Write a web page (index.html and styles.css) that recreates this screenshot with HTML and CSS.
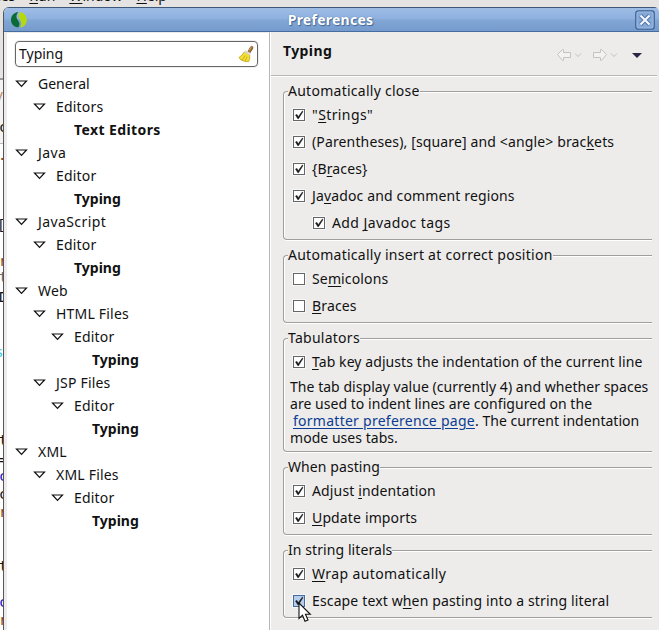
FILE: index.html
```html
<!DOCTYPE html>
<html lang="en">
<head>
<meta charset="utf-8">
<title>Preferences</title>
<link rel="stylesheet" href="styles.css">
</head>
<body>
<svg class="defs" width="0" height="0" aria-hidden="true">
  <symbol id="tick" viewBox="0 0 12 12"><path d="M2.500 6 4 5.400 5.200 7.800 9.400 2 10 2.600 5.500 9.700H4.800Z" fill="#161616" stroke="#161616" stroke-width=".5"/></symbol>
  <symbol id="open" viewBox="0 0 13 8"><path d="M1.500 1H11.500L6.500 6.300Z" fill="#fff" stroke="#111" stroke-width="1.200"/></symbol>
</svg>
<div class="menubar"><span>ces</span><span><u>R</u>un</span><span><u>W</u>indow</span><span><u>H</u>elp</span></div>
<div class="workspace">
  <div class="editor" aria-hidden="true">
    <i class="code tan l1">y</i><i class="code l2">c</i><i class="code brown l3">.</i><i class="code l4">[</i><i class="code brown l5">r</i><i class="code grey l6">t</i><i class="code l7">D</i><i class="code cyan l8">s</i><i class="code l9">t</i><i class="code l10">=</i><i class="code blue l11">c</i><i class="code l12">c</i><i class="code brown l13">r</i><i class="code l14">t</i><i class="code blue l15">c</i><i class="code brown l16">r</i>
  </div>
  <div class="dialog">
    <div class="titlebar">
      <svg class="logo" width="18" height="18" viewBox="0 0 18 18"><path d="M8.300 1C3.500 1.500 1 5 1 9c0 4 3 7.300 7.500 7.300C10.500 13 9 10.500 7.200 8.300 5.900 6 6.300 3.400 8.300 1Z" fill="#0b6b35"/><path d="M10 1c4.200.8 6.800 4 6.800 8 0 4-2.800 7-6.600 7.500C11.900 13.500 11.600 10.600 9.800 8.300 8.200 6 8.400 3.500 10 1Z" fill="#b5da0b"/></svg>
      <span class="title">Preferences</span>
      <svg class="close" width="20" height="20" viewBox="0 0 20 20"><rect x=".8" y=".8" width="18.400" height="18.400" rx="2.500" fill="#84a8d8" stroke="#3c618f" stroke-width="1.300"/><rect x="2" y="2" width="16" height="16" rx="1.500" fill="none" stroke="#a8c3e6" stroke-width=".7"/><path d="M5.500 5.500l9 9M14.500 5.500l-9 9" stroke="#4a70a3" stroke-width="4"/><path d="M5.500 5.500l9 9M14.500 5.500l-9 9" stroke="#f0f5fb" stroke-width="2.300"/></svg>
    </div>
    <div class="panes">
      <div class="sidebar">
        <div class="search"><span>Typing</span>
          <svg width="16" height="18" viewBox="0 0 16 18"><path d="M9.500 7.500 12.300 2.300Q13.300.8 14.400 1.600 15.400 2.500 14.400 4L11.300 8.800Z" fill="#a87332" stroke="#70451c" stroke-width=".8"/><path d="M11 5.500l2.500-3.800" stroke="#e0b779" stroke-width=".8"/><path d="M6.300 7Q4.500 10.300 1 12.500 2.500 15.500 5 15.700 8 17 10.700 16.500 12.300 13.500 11.700 9.800Z" fill="#f3df35" stroke="#bfa318" stroke-width=".8"/><path d="M7 10.500 4.300 15M9 11.500 7.300 16" stroke="#c8ad1c" stroke-width=".9"/><path d="M7 6.200l5.300 3.200" stroke="#e0d8cc" stroke-width="2.500"/></svg>
        </div>
        <div class="tree">
          <div class="node"><svg><use href="#open"/></svg><span>General</span></div>
          <div class="node d1"><svg><use href="#open"/></svg><span class="loose">Editors</span></div>
          <div class="node leaf d2"><span class="looser">Text Editors</span></div>
          <div class="node"><svg><use href="#open"/></svg><span class="looser">Java</span></div>
          <div class="node d1"><svg><use href="#open"/></svg><span class="loose">Editor</span></div>
          <div class="node leaf d2"><span>Typing</span></div>
          <div class="node"><svg><use href="#open"/></svg><span class="looser">JavaScript</span></div>
          <div class="node d1"><svg><use href="#open"/></svg><span class="loose">Editor</span></div>
          <div class="node leaf d2"><span>Typing</span></div>
          <div class="node"><svg><use href="#open"/></svg><span class="loose">Web</span></div>
          <div class="node d1"><svg><use href="#open"/></svg><span class="loose">HTML Files</span></div>
          <div class="node d2"><svg><use href="#open"/></svg><span class="loose">Editor</span></div>
          <div class="node leaf d3"><span>Typing</span></div>
          <div class="node d1"><svg><use href="#open"/></svg><span class="loose">JSP Files</span></div>
          <div class="node d2"><svg><use href="#open"/></svg><span class="loose">Editor</span></div>
          <div class="node leaf d3"><span>Typing</span></div>
          <div class="node"><svg><use href="#open"/></svg><span class="loose">XML</span></div>
          <div class="node d1"><svg><use href="#open"/></svg><span class="loose">XML Files</span></div>
          <div class="node d2"><svg><use href="#open"/></svg><span class="loose">Editor</span></div>
          <div class="node leaf d3"><span>Typing</span></div>
        </div>
      </div>
      <div class="page">
        <div class="heading"><span>Typing</span>
          <svg width="88" height="14" viewBox="0 0 88 14"><g fill="#f3f2f1" stroke="#c3c2c1"><path d="M1.500 6.500 6.500 1.500H7.500V4.500H14.500V9.500H7.500V12.500H6.500Z"/><path d="M50.500 6.500 45.500 1.500H44.500V4.500H37.500V9.500H44.500V12.500H45.500Z"/><path d="M19 5.500 22 8.500 25 5.500M55 5.500 58 8.500 61 5.500" fill="none"/></g><path d="M76 5H86L81 10Z" fill="#2b2445"/></svg>
        </div>
        <div class="groups">
          <div class="group"><div class="legend">Automatically close</div>
            <div class="check"><b><svg><use href="#tick"/></svg></b><span class="looser">"<u>S</u>trings"</span></div>
            <div class="check"><b><svg><use href="#tick"/></svg></b><span>(Parentheses), [square] and &lt;angle&gt; brac<u>k</u>ets</span></div>
            <div class="check"><b><svg><use href="#tick"/></svg></b><span>{B<u>r</u>aces}</span></div>
            <div class="check"><b><svg><use href="#tick"/></svg></b><span>Ja<u>v</u>adoc and comment regions</span></div>
            <div class="check nested"><b><svg><use href="#tick"/></svg></b><span class="looser">Add <u>J</u>avadoc tags</span></div>
          </div>
          <div class="group"><div class="legend">Automatically insert at correct position</div>
            <div class="check"><b></b><span>Se<u>m</u>icolons</span></div>
            <div class="check"><b></b><span><u>B</u>races</span></div>
          </div>
          <div class="group"><div class="legend">Tabulators</div>
            <div class="check"><b><svg><use href="#tick"/></svg></b><span class="snug"><u>T</u>ab key adjusts the indentation of the current line</span></div>
            <p class="note">The tab display value (currently 4) and whether spaces<br>are used to indent lines are configured on the<br><a class="link">formatter preference page</a>. The current indentation<br>mode uses tabs.</p>
          </div>
          <div class="group"><div class="legend snug">When pasting</div>
            <div class="check"><b><svg><use href="#tick"/></svg></b><span>Adjust <u>i</u>ndentation</span></div>
            <div class="check"><b><svg><use href="#tick"/></svg></b><span>
<u>U</u>pdate imports</span></div>
          </div>
          <div class="group"><div class="legend snug">In string literals</div>
            <div class="check"><b><svg><use href="#tick"/></svg></b><span class="looser"><u>W</u>rap automatically</span></div>
            <div class="check"><b class="hot"><svg><use href="#tick"/></svg></b><span>Escape text w<u>h</u>en pasting into a string literal</span></div>
          </div>
        </div>
      </div>
    </div>
  </div>
</div>
<svg class="cursor" width="14" height="21" viewBox="0 0 14 21"><path d="M1 1V16.500L4.500 13.300 7 19.200 10 18 7.500 12.300H12.300Z" fill="#fff" stroke="#111" stroke-width="1.100"/></svg>
</body>
</html>
```
FILE: styles.css
```css
* { box-sizing: border-box; }
body { margin: 0; width: 659px; height: 630px; overflow: hidden; position: relative; background: #e5e4e2; color: #111; font: 14px/17px "Noto Sans", "Open Sans", sans-serif; display: flex; flex-direction: column; }
.defs { position: absolute; }
u { text-decoration-thickness: 1px; text-underline-offset: 2px; }
.menubar { height: 7px; flex: none; overflow: hidden; display: flex; gap: 14px; line-height: 20px; margin-left: -6px; }
.menubar span { margin-top: -14px; }
.workspace { flex: 1; display: flex; min-height: 0; }
.editor { width: 3px; position: relative; overflow: hidden; background: linear-gradient(#e5e4e2 0 71px, #999 71px 73px, #f5f3f1 73px 136px, #bbb 136px 137px, #fff 137px); }
.code { position: absolute; left: -1px; font: 14px/16px "DejaVu Sans Mono", monospace; }
.tan { color: #b98b61; } .brown { color: #943c0c; } .grey { color: #667; } .cyan { color: #39c5e8; } .blue { color: #2610c8; }
.l1 { top: 80px; left: -5px; } .l2 { top: 112px; } .l3 { top: 140px; left: -2px; } .l4 { top: 210px; left: -3px; } .l5 { top: 246px; } .l6 { top: 262px; } .l7 { top: 282px; } .l8 { top: 337px; left: -5px; }
.l9 { top: 425px; } .l10 { top: 445px; } .l11 { top: 461px; } .l12 { top: 479px; } .l13 { top: 497px; } .l14 { top: 551px; } .l15 { top: 587px; } .l16 { top: 605px; }
.dialog { flex: 1; display: flex; flex-direction: column; border-left: 1px solid #565656; border-top-left-radius: 6px; border-top-right-radius: 5px; background: #edeceb; overflow: hidden; }
.titlebar { height: 25px; flex: none; display: flex; align-items: center; padding: 0 4px 0 6px; border-top: 1px solid #3f5878; border-bottom: 1px solid #466ca0; background: linear-gradient(#9ebde5, #8fb1df 45%, #81a6d5 55%, #759bcd); }
.title { flex: 1; text-align: center; padding-right: 2px; letter-spacing: .25px; color: #fff; font-weight: bold; text-shadow: 0 0 1px #426696, 1px 1px 1px #426696; }
.panes { flex: 1; display: flex; min-height: 0; }
.sidebar { width: 266px; background: #fff; border-left: 3px solid #edeceb; border-right: 1px solid #b7b6b5; border-top: 1px solid #edeceb; padding: 8px 11px 0 8px; }
.search { width: 243px; height: 26px; border: 1px solid #666; border-radius: 4px; display: flex; align-items: center; justify-content: space-between; padding: 0 3px 0 3px; box-shadow: 0 0 0 1px #efefef; }
.search span { margin-top: -2px; }
.tree { padding-top: 5px; }
.node { height: 23px; display: flex; align-items: center; }
.node svg { width: 13px; height: 8px; margin-right: 10px; }
.d1 { padding-left: 18px; } .d2 { padding-left: 36px; } .d3 { padding-left: 54px; }
.loose { letter-spacing: .2px; }
.leaf { font-weight: bold; }
.leaf span { margin-left: 23px; }
.page { flex: 1; border-left: 1px solid #fff; }
.heading { height: 44px; display: flex; align-items: center; justify-content: space-between; padding: 0 13px 7px 12px; border-bottom: 1px solid #b7b6b5; box-shadow: 0 1px #fff; font-weight: bold; letter-spacing: .4px; margin-right: 2px; }
.heading svg { margin-top: 10px; }
.groups { padding: 15px 7px 0 12px; display: flex; flex-direction: column; gap: 15px; }
.group { border: 1px solid #9f9e9d; border-right: 0; border-radius: 4px 0 0 4px; box-shadow: 0 1px #fff, inset 1px 1px #fff; padding-bottom: 3px; }
.legend { width: max-content; height: 18px; line-height: 18px; margin: -10px 0 1px 4px; background: #edeceb; white-space: nowrap; letter-spacing: .26px; }
.check { height: 27px; display: flex; align-items: center; padding-left: 9px; white-space: nowrap; letter-spacing: .14px; }
.nested { padding-left: 29px; }
.check b { width: 12px; height: 12px; border: 1px solid #666; background: #fff; margin-right: 7px; display: flex; box-shadow: 0 0 0 1px #f7f7f7; }
.check b svg { width: 12px; height: 12px; margin: -1px; flex: none; }
.check .hot { background: #b7cdec; border-color: #456a9e; }
.note { margin: 3px 0 2px 6px; white-space: nowrap; letter-spacing: .04px; }
.link { color: #0b3c91; text-decoration: underline; margin-left: 3px; text-underline-offset: 2px; letter-spacing: .26px; }
.snug { letter-spacing: .08px; }
.looser { letter-spacing: .4px; }
.cursor { position: absolute; left: 298px; top: 602px; }
```
